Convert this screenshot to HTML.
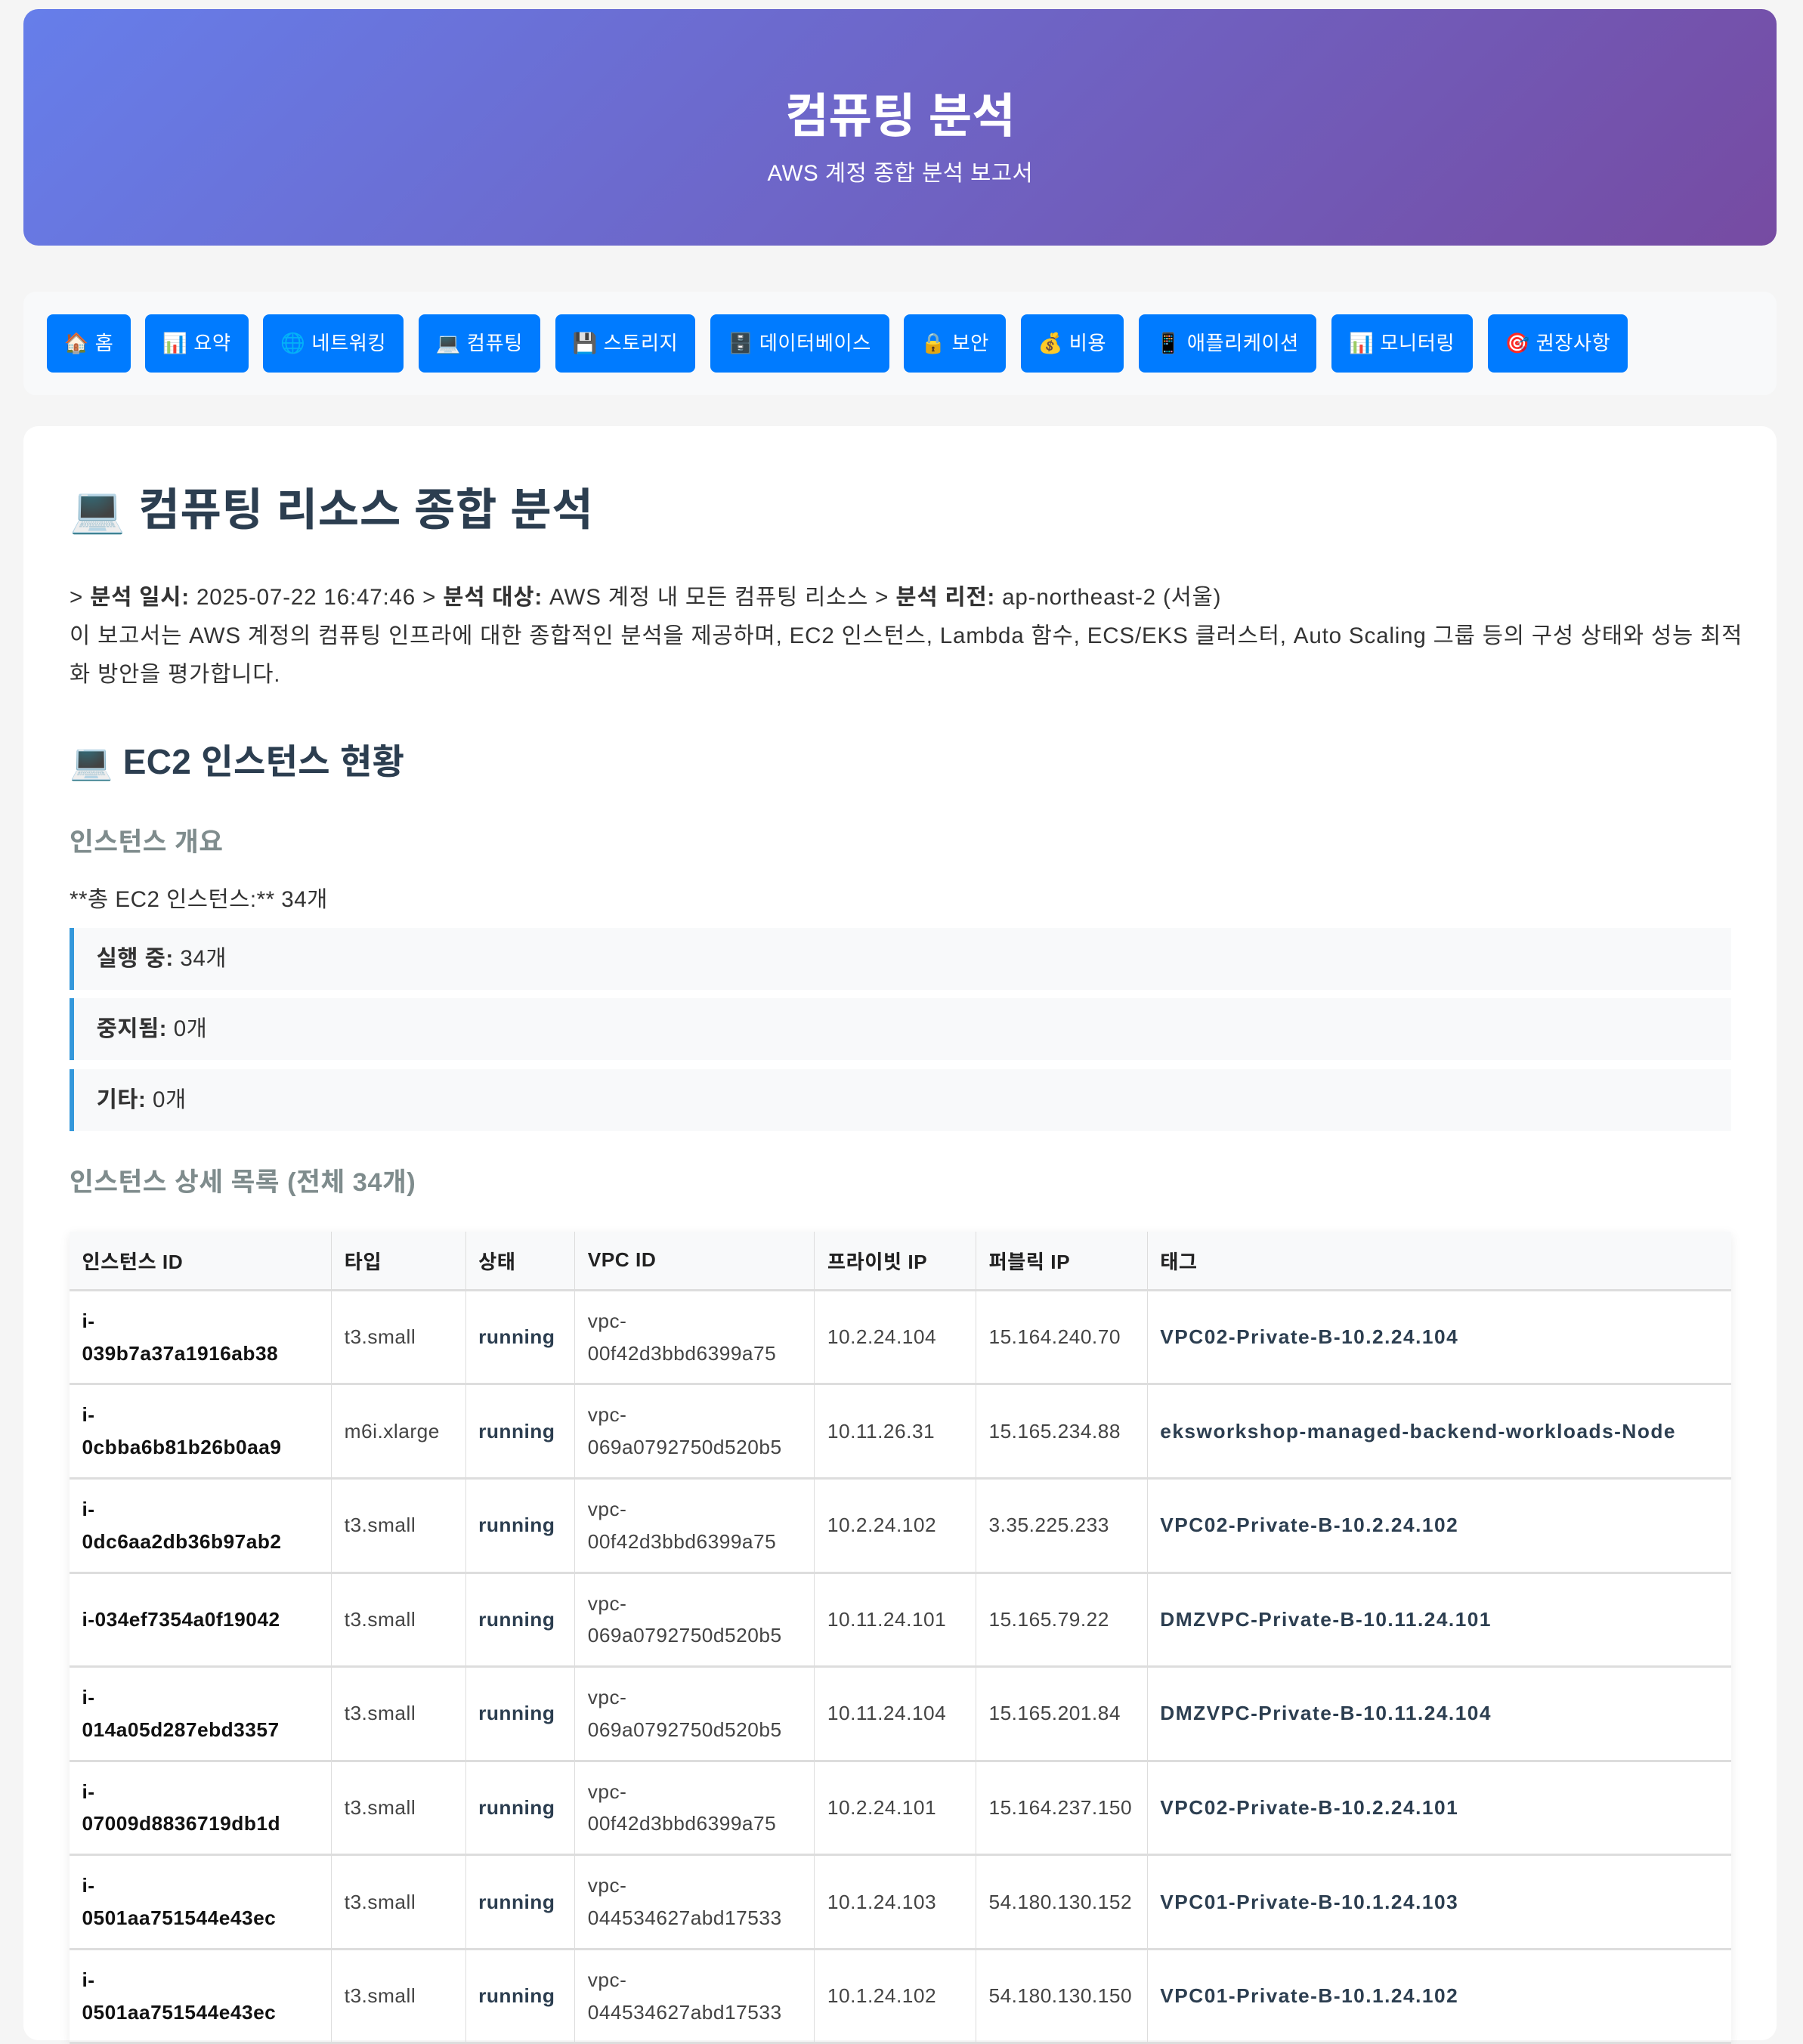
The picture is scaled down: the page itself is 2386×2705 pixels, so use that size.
<!DOCTYPE html>
<html><head><meta charset="utf-8">
<style>
html,body{margin:0;padding:0;background:#f5f5f5}
body{zoom:1.64325;width:1452px;height:1568px;overflow:hidden;font-family:"Liberation Sans","Noto Sans CJK KR",sans-serif;color:#333;position:relative}
.hdr{position:absolute;left:19px;top:7px;width:1412px;height:191px;border-radius:12px;background:linear-gradient(135deg,#667eea,#764ba2);color:#fff;text-align:center}
.hdr h1{margin:0;position:absolute;top:62px;left:0;right:0;font-size:38px;line-height:50px;font-weight:bold}
.hdr p{margin:0;position:absolute;top:121px;left:0;right:0;font-size:18px;line-height:24px;letter-spacing:0.3px}
.nav{position:absolute;left:19px;top:235px;width:1412px;height:83px;border-radius:10px;background:#f8f9fa}
.nav a{position:absolute;top:18px;height:47px;line-height:47px;background:#007bff;color:#fff;border-radius:5px;font-size:16px;text-align:center;text-decoration:none;letter-spacing:0.3px}
.card{position:absolute;left:19px;top:343px;width:1412px;height:1300px;background:#fff;border-radius:12px}
.c{position:absolute;left:56px;width:1338px}
.h1{top:386px;font-size:36px;line-height:50px;font-weight:bold;color:#2c3e50;letter-spacing:0.4px}
.p{top:466px;font-size:18px;line-height:31px;letter-spacing:0.5px;white-space:nowrap}
.h2{top:594px;font-size:28px;line-height:40px;font-weight:bold;color:#2c3e50;letter-spacing:0.2px}
.h3{font-size:21px;line-height:30px;font-weight:bold;color:#7f8c8d;letter-spacing:0.3px}
.box{height:50px;background:#f8f9fa;border-left:4px solid #3498db;box-sizing:border-box;padding-left:18px;font-size:18px;line-height:50px;letter-spacing:0.3px}
table{position:absolute;left:56px;top:992px;width:1338px;border-collapse:collapse;table-layout:fixed;font-size:16px;box-shadow:0 2px 8px rgba(0,0,0,.08);letter-spacing:0.3px}
th{background:#f8f9fa;text-align:left;height:47px;padding:0 10px;font-weight:bold;color:#222;border-right:1px solid #ddd;border-bottom:2px solid #ddd;box-sizing:border-box}
td{padding:11px 10px;line-height:26px;height:75px;box-sizing:border-box;border-right:1px solid #ddd;border-bottom:2px solid #ddd;color:#444;word-break:break-all}
th:last-child,td:last-child{border-right:none}
td.id{font-weight:bold;color:#111}
td.b{font-weight:bold;color:#2c3e50}
td.t{letter-spacing:0.9px}
td.n{white-space:nowrap}
</style></head><body>
<div class="hdr"><h1>컴퓨팅 분석</h1><p>AWS 계정 종합 분석 보고서</p></div>
<div class="nav">
<a style="left:19px;width:67px">🏠 홈</a>
<a style="left:98px;width:83px">📊 요약</a>
<a style="left:193px;width:113px">🌐 네트워킹</a>
<a style="left:318px;width:98px">💻 컴퓨팅</a>
<a style="left:428px;width:113px">💾 스토리지</a>
<a style="left:553px;width:144px">🗄️ 데이터베이스</a>
<a style="left:709px;width:82px">🔒 보안</a>
<a style="left:803px;width:83px">💰 비용</a>
<a style="left:898px;width:143px">📱 애플리케이션</a>
<a style="left:1053px;width:114px">📊 모니터링</a>
<a style="left:1179px;width:113px">🎯 권장사항</a>
</div>
<div class="card"></div>
<div class="c h1">💻 컴퓨팅 리소스 종합 분석</div>
<div class="c p">&gt; <b>분석 일시:</b> 2025-07-22 16:47:46 &gt; <b>분석 대상:</b> AWS 계정 내 모든 컴퓨팅 리소스 &gt; <b>분석 리전:</b> ap-northeast-2 (서울)<br>이 보고서는 AWS 계정의 컴퓨팅 인프라에 대한 종합적인 분석을 제공하며, EC2 인스턴스, Lambda 함수, ECS/EKS 클러스터, Auto Scaling 그룹 등의 구성 상태와 성능 최적<br>화 방안을 평가합니다.</div>
<div class="c h2">💻 EC2 인스턴스 현황</div>
<div class="c h3" style="top:664px">인스턴스 개요</div>
<div class="c" style="top:712px;font-size:18px;line-height:26px;letter-spacing:0.3px">**총 EC2 인스턴스:** 34개</div>
<div class="c box" style="top:747px"><b>실행 중:</b> 34개</div>
<div class="c box" style="top:804px"><b>중지됨:</b> 0개</div>
<div class="c box" style="top:861px"><b>기타:</b> 0개</div>
<div class="c h3" style="top:938px">인스턴스 상세 목록 (전체 34개)</div>
<table>
<colgroup><col style="width:211px"><col style="width:108px"><col style="width:88px"><col style="width:193px"><col style="width:130px"><col style="width:138px"><col></colgroup>
<tr><th>인스턴스 ID</th><th>타입</th><th>상태</th><th>VPC ID</th><th>프라이빗 IP</th><th>퍼블릭 IP</th><th>태그</th></tr>
<tr><td class="id">i-<br>039b7a37a1916ab38</td><td>t3.small</td><td class="b">running</td><td>vpc-<br>00f42d3bbd6399a75</td><td>10.2.24.104</td><td class="n">15.164.240.70</td><td class="b t">VPC02-Private-B-10.2.24.104</td></tr>
<tr><td class="id">i-<br>0cbba6b81b26b0aa9</td><td>m6i.xlarge</td><td class="b">running</td><td>vpc-<br>069a0792750d520b5</td><td>10.11.26.31</td><td class="n">15.165.234.88</td><td class="b t">eksworkshop-managed-backend-workloads-Node</td></tr>
<tr><td class="id">i-<br>0dc6aa2db36b97ab2</td><td>t3.small</td><td class="b">running</td><td>vpc-<br>00f42d3bbd6399a75</td><td>10.2.24.102</td><td class="n">3.35.225.233</td><td class="b t">VPC02-Private-B-10.2.24.102</td></tr>
<tr><td class="id">i-034ef7354a0f19042</td><td>t3.small</td><td class="b">running</td><td>vpc-<br>069a0792750d520b5</td><td>10.11.24.101</td><td class="n">15.165.79.22</td><td class="b t">DMZVPC-Private-B-10.11.24.101</td></tr>
<tr><td class="id">i-<br>014a05d287ebd3357</td><td>t3.small</td><td class="b">running</td><td>vpc-<br>069a0792750d520b5</td><td>10.11.24.104</td><td class="n">15.165.201.84</td><td class="b t">DMZVPC-Private-B-10.11.24.104</td></tr>
<tr><td class="id">i-<br>07009d8836719db1d</td><td>t3.small</td><td class="b">running</td><td>vpc-<br>00f42d3bbd6399a75</td><td>10.2.24.101</td><td class="n">15.164.237.150</td><td class="b t">VPC02-Private-B-10.2.24.101</td></tr>
<tr><td class="id">i-<br>0501aa751544e43ec</td><td>t3.small</td><td class="b">running</td><td>vpc-<br>044534627abd17533</td><td>10.1.24.103</td><td class="n">54.180.130.152</td><td class="b t">VPC01-Private-B-10.1.24.103</td></tr>
<tr><td class="id">i-<br>0501aa751544e43ec</td><td>t3.small</td><td class="b">running</td><td>vpc-<br>044534627abd17533</td><td>10.1.24.102</td><td class="n">54.180.130.150</td><td class="b t">VPC01-Private-B-10.1.24.102</td></tr>
</table>
</body></html>
